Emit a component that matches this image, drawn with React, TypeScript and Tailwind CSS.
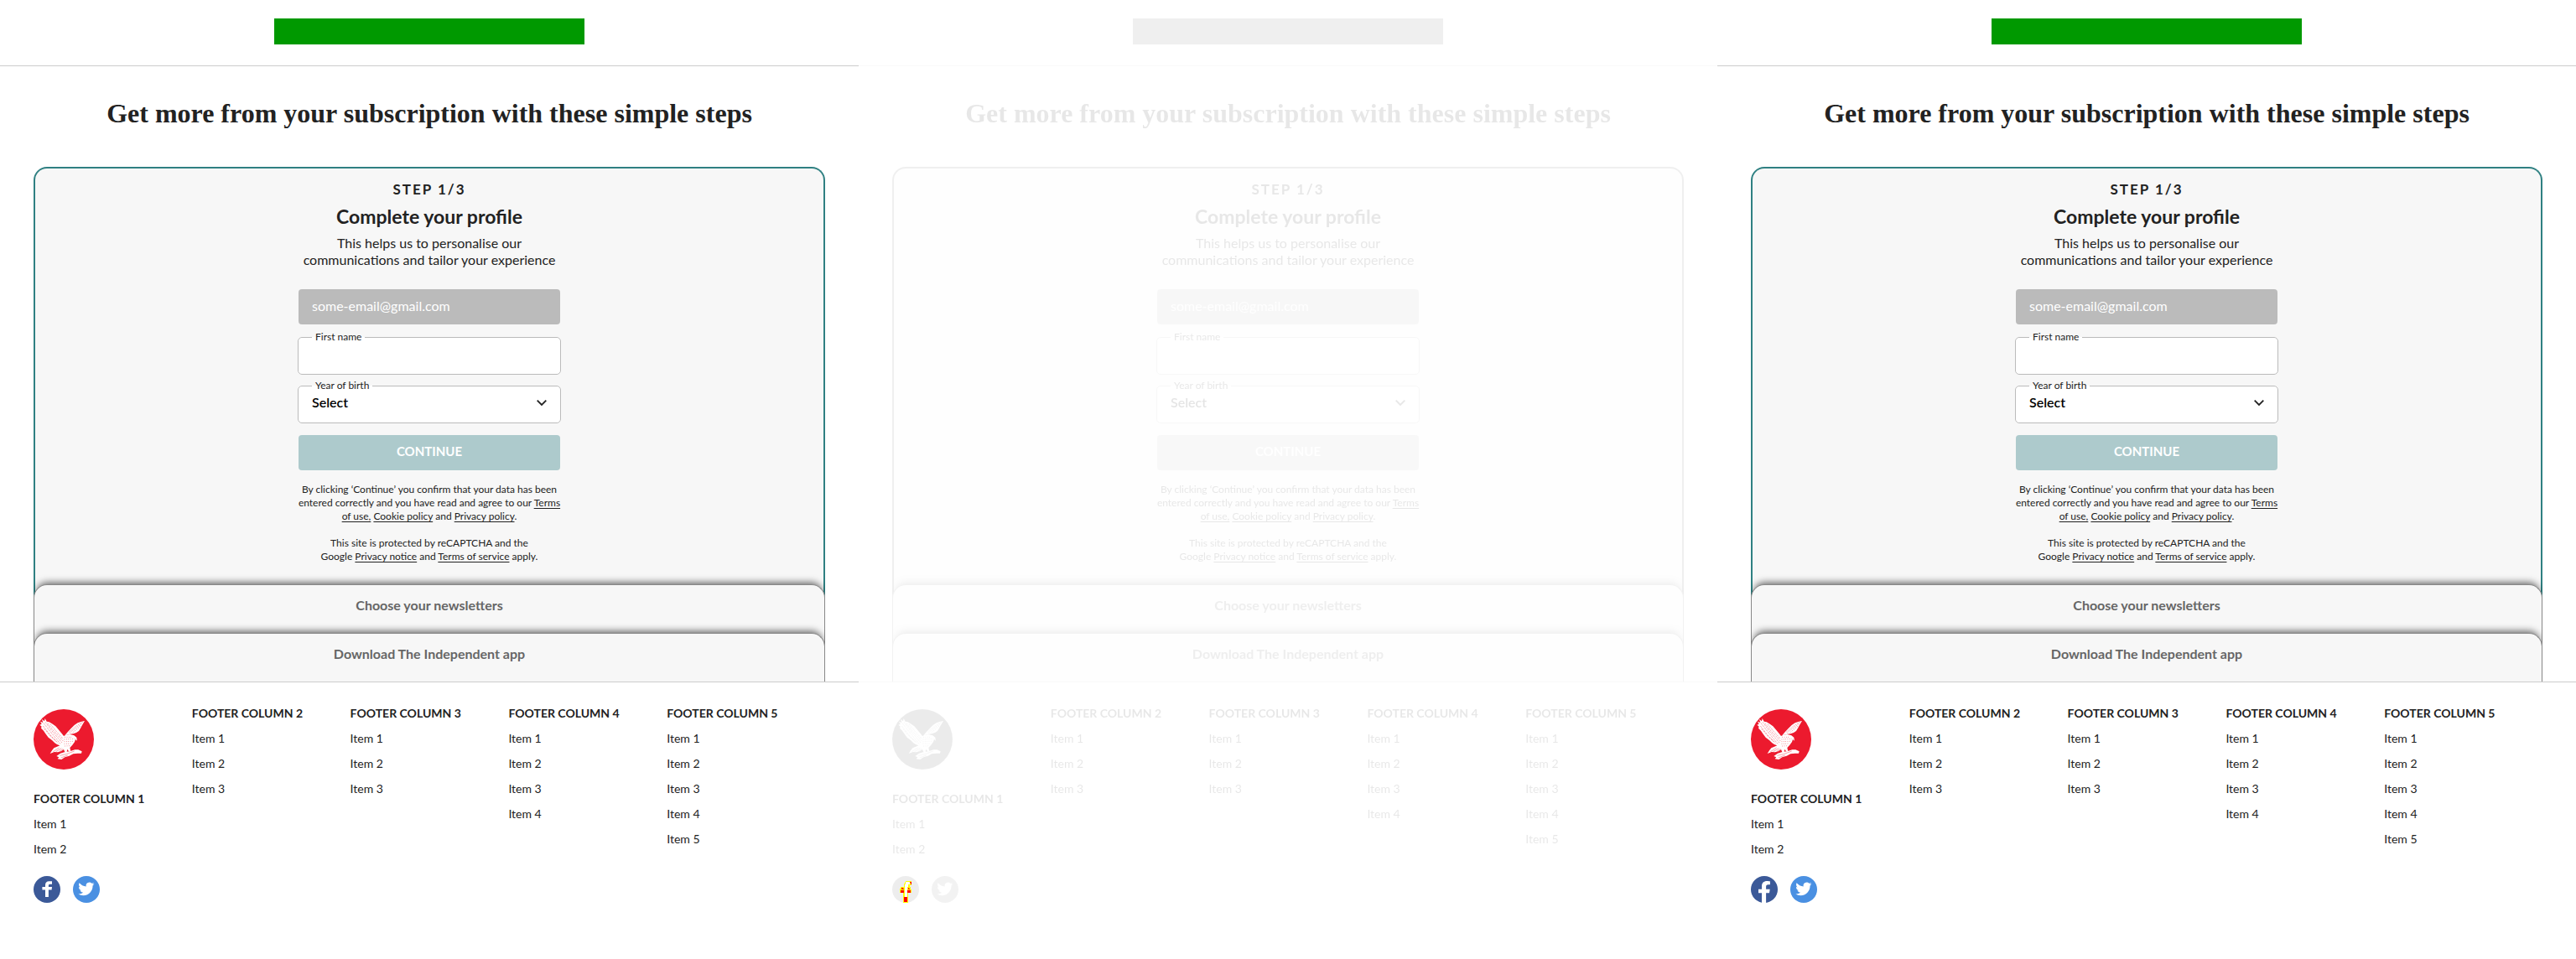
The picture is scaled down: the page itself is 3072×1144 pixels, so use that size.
import React from "react";

type Variant = "before" | "diff" | "after";

const FADE = "grayscale opacity-10";
const LINK = "underline underline-offset-2";

const columns: { title: string; items: string[] }[] = [
  { title: "Footer column 2", items: ["Item 1", "Item 2", "Item 3"] },
  { title: "Footer column 3", items: ["Item 1", "Item 2", "Item 3"] },
  { title: "Footer column 4", items: ["Item 1", "Item 2", "Item 3", "Item 4"] },
  { title: "Footer column 5", items: ["Item 1", "Item 2", "Item 3", "Item 4", "Item 5"] },
];

function EagleLogo() {
  return (
    <svg viewBox="0 0 216 216" className="size-[72px]" role="img" aria-label="The Independent">
      <circle cx="108" cy="108" r="108" fill="#ec1a2e" />
      <g fill="#fff">
        <path d="M41 33 L47 44 L56 46 L66 52 L79 61 L91 75 L101 87 L108 96 L116 92 L130 90 L145 94 L154 101 L156 113 L150 108 L147 117 L139 128 L130 138 L133 151 L126 151 L121 143 L119 153 L112 153 L108 144 L98 151 L86 154 L74 153 L59 159 L66 148 L73 139 L84 134 L94 130 L84 126 L76 121 L66 111 L53 101 L43 88 L36 77 L27 68 L29 62 L22 56 L29 53 L24 44 L34 48 L30 36 L39 43 Z" />
        <path d="M183 42 L172 44 L158 49 L146 57 L134 69 L122 82 L112 94 L130 89 L142 88 L153 84 L162 78 L168 68 L174 57 Z" />
        <path d="M82 168 L96 158 L110 154 L132 150 L148 145 L160 145 L173 151 L171 158 L158 158 L142 160 L128 167 L112 172 L100 180 L86 178 L91 172 Z" />
      </g>
      <g fill="none" stroke="#ec1a2e" strokeWidth="1.2">
        <path d="M36 50 L60 80 L96 124 M42 46 L66 78 L102 120 M50 50 L74 80 L106 114 M34 60 L58 90 L88 122 M60 53 L82 80 L106 106 M38 70 L62 98 L82 116" strokeDasharray="7 3" />
        <path d="M176 46 L150 62 L124 84 M172 52 L150 68 L130 84 M168 60 L152 74 L140 84" strokeDasharray="5 3" />
        <path d="M92 138 L70 152 M100 140 L80 152 M106 142 L92 152 M94 166 L120 160 L146 150 M98 174 L122 165" />
        <path d="M112 100 L140 100 M110 108 L146 106 M110 116 L140 115 M110 124 L136 123 M112 132 L130 131" strokeWidth="2" strokeDasharray="2 5" />
      </g>
    </svg>
  );
}

function FacebookIcon({ full }: { full: boolean }) {
  return (
    <svg viewBox="0 0 32 32" className="size-8" aria-hidden="true">
      <circle cx="16" cy="16" r="16" fill="#3b5998" />
      {full ? (
        <path
          fill="#fff"
          d="M13 32V20.300H9V15.800H13V12.200C13 8.200 15.400 6 19.200 6C21 6 22.900 6.300 22.900 6.300V10.200H20.800C18.700 10.200 18.100 11.400 18.100 12.800V15.800H22.700L22 20.300H18.100V32Z"
        />
      ) : (
        <path
          fill="#fff"
          d="M14 25V16.600H10.400V13H14V10.800C14 7.700 15.700 6.200 18.500 6.200H22V9.800H19.700C18.300 9.800 17.900 10.500 17.900 11.700V13H22L21.600 16.600H17.900V25Z"
        />
      )}
    </svg>
  );
}

function TwitterIcon() {
  return (
    <svg viewBox="0 0 32 32" className="size-8" aria-hidden="true">
      <circle cx="16" cy="16" r="16" fill="#4a90e2" />
      <path
        fill="#fff"
        transform="translate(6.300 5.800) scale(.8)"
        d="M23.953 4.570a10 10 0 01-2.825.775 4.958 4.958 0 002.163-2.723c-.951.555-2.005.959-3.127 1.184a4.920 4.920 0 00-8.384 4.482C7.690 8.095 4.067 6.130 1.640 3.162a4.822 4.822 0 00-.666 2.475c0 1.710.870 3.213 2.188 4.096a4.904 4.904 0 01-2.228-.616v.060a4.923 4.923 0 003.946 4.827 4.996 4.996 0 01-2.212.085 4.936 4.936 0 004.604 3.417 9.867 9.867 0 01-6.102 2.105c-.390 0-.779-.023-1.170-.067a13.995 13.995 0 007.557 2.209c9.053 0 13.998-7.496 13.998-13.985 0-.210 0-.420-.015-.630A9.935 9.935 0 0024 4.590z"
      />
    </svg>
  );
}

function DiffMark() {
  return (
    <svg viewBox="0 0 32 32" className="absolute inset-0 size-8" shapeRendering="crispEdges" aria-hidden="true">
      <path fill="#ff0" d="M16 6h7v5h-2v2h1v3h1v4h-4v12h-6V20H9v-5h1v-2h4V9h1V7h1Z" />
      <path fill="#fff" d="M16 7h5v3h-2v3h-1v12h-3V10h1Z" />
      <path fill="#f00" d="M21 7h2v3h-1v-2h-1ZM11 14h2v1h1v1h-3ZM10 17h4v3h-4ZM18 17h4v3h-4ZM19 14h1v1h1v1h-2ZM14 25h4v6h-4Z" />
    </svg>
  );
}

function ProfileForm({ id }: { id: string }) {
  return (
    <form className="mx-auto flex w-[314px] flex-col text-left" onSubmit={(e) => e.preventDefault()}>
      <input
        type="email"
        aria-label="Email"
        readOnly
        value="some-email@gmail.com"
        className="mx-px h-[42px] rounded bg-[#bbb] px-4 pb-1 text-white outline-none"
      />
      <fieldset className="mt-[7px] h-[53px] rounded-[5px] border border-[#bbb] bg-white px-4">
        <legend className="h-4 px-1 text-xs">
          <label htmlFor={id + "-name"}>First name</label>
        </legend>
        <input id={id + "-name"} type="text" className="h-8 w-full bg-transparent outline-none" />
      </fieldset>
      <fieldset className="mt-[5px] h-[53px] rounded-[5px] border border-[#bbb] bg-white px-4">
        <legend className="h-4 px-1 text-xs">
          <label htmlFor={id + "-year"}>Year of birth</label>
        </legend>
        <div className="grid items-center">
          <select
            id={id + "-year"}
            className="col-start-1 row-start-1 h-6 w-full appearance-none bg-transparent font-semibold text-black outline-none"
          >
            <option>Select</option>
          </select>
          <svg
            viewBox="0 0 12 7"
            className="pointer-events-none col-start-1 row-start-1 h-[7px] w-3 justify-self-end"
            fill="none"
            stroke="#222"
            strokeWidth="1.800"
            aria-hidden="true"
          >
            <path d="M.7 .7 6 6 11.300 .7" />
          </svg>
        </div>
      </fieldset>
      <button
        type="submit"
        className="mx-px mt-3.5 h-[42px] rounded bg-[#adcacc] pb-1 text-center text-[15px] font-bold text-white uppercase"
      >
        Continue
      </button>
    </form>
  );
}

function Panel({ variant }: { variant: Variant }) {
  const fade = variant === "diff" ? FADE : "";
  return (
    <section className="flex min-w-0 flex-col bg-white text-[#222]">
      <header className={`border-b border-[#ccc] px-10 pt-[22px] pb-[25px] ${fade}`}>
        <div className="mx-auto h-[31px] w-[370px] bg-[#009900]" />
      </header>

      <main className={`px-10 ${fade}`}>
        <h1 className="pt-[34px] pb-[42px] text-center font-['Liberation_Serif',serif] text-[32px] leading-[44px] font-bold">
          Get more from your subscription with these simple steps
        </h1>

        <article className="rounded-t-2xl border-2 border-b-0 border-[#2f8082] bg-[#f7f7f7] pt-[13px] pb-[41px] text-center">
          <p className="text-[17px] leading-6 font-bold tracking-[2px] uppercase">Step 1/3</p>
          <h2 className="mt-1.5 text-[23px] leading-7 font-bold">Complete your profile</h2>
          <p className="mt-2 mb-[25px] leading-5">
            This helps us to personalise our
            <br />
            communications and tailor your experience
          </p>
          <ProfileForm id={variant} />
          <div className="mx-auto mt-[15px] w-[318px] text-xs leading-4">
            <p>
              By clicking ‘Continue’ you confirm that your data has been entered correctly and you have read and agree to
              our <a href="#terms" className={LINK}>Terms of use,</a> <a href="#cookies" className={LINK}>Cookie policy</a>{" "}
              and <a href="#privacy" className={LINK}>Privacy policy</a>.
            </p>
            <p className="mt-4">
              This site is protected by reCAPTCHA and the
              <br />
              Google <a href="#notice" className={LINK}>Privacy notice</a> and{" "}
              <a href="#service" className={LINK}>Terms of service</a> apply.
            </p>
          </div>
        </article>

        {["Choose your newsletters", "Download The Independent app"].map((title, i) => (
          <article key={title} className="-mt-4">
            <h2
              className={`rounded-t-2xl border border-b-0 border-[#888] bg-[#f7f7f7] pt-3.5 text-center leading-5 font-bold text-[#666] shadow-[0_-6px_8px_-4px_rgba(0,0,0,0.6)] [clip-path:inset(-16px_0_0_0)] ${
                i === 0 ? "h-[74px]" : "h-[58px]"
              }`}
            >
              {title}
            </h2>
          </article>
        ))}
      </main>

      <footer>
        <hr className={`border-[#ccc] ${fade}`} />
        <div className="grid grid-cols-5 px-10 pt-8 pb-16 text-sm leading-5">
          <div>
            <div className={fade}>
              <EagleLogo />
              <h3 className="mt-[25px] font-bold uppercase">Footer column 1</h3>
              <ul className="mt-2.5 flex flex-col gap-2.5">
                <li><a href="#item-1">Item 1</a></li>
                <li><a href="#item-2">Item 2</a></li>
              </ul>
            </div>
            <div className="mt-[22px] flex gap-[15px]">
              <a href="#facebook" aria-label="Facebook" className="relative">
                <span className={`block ${fade}`}>
                  <FacebookIcon full={variant === "after"} />
                </span>
                {variant === "diff" && <DiffMark />}
              </a>
              <a href="#twitter" aria-label="Twitter" className={fade}>
                <TwitterIcon />
              </a>
            </div>
          </div>
          {columns.map((column) => (
            <nav key={column.title} aria-label={column.title} className={`-mt-[5px] ${fade}`}>
              <h3 className="font-bold whitespace-nowrap uppercase">{column.title}</h3>
              <ul className="mt-2.5 flex flex-col gap-2.5">
                {column.items.map((item) => (
                  <li key={item}>
                    <a href="#item">{item}</a>
                  </li>
                ))}
              </ul>
            </nav>
          ))}
        </div>
      </footer>
    </section>
  );
}

export default function App() {
  return (
    <div className="grid grid-cols-3 bg-white font-['Lato',sans-serif] text-base">
      <Panel variant="before" />
      <Panel variant="diff" />
      <Panel variant="after" />
    </div>
  );
}
